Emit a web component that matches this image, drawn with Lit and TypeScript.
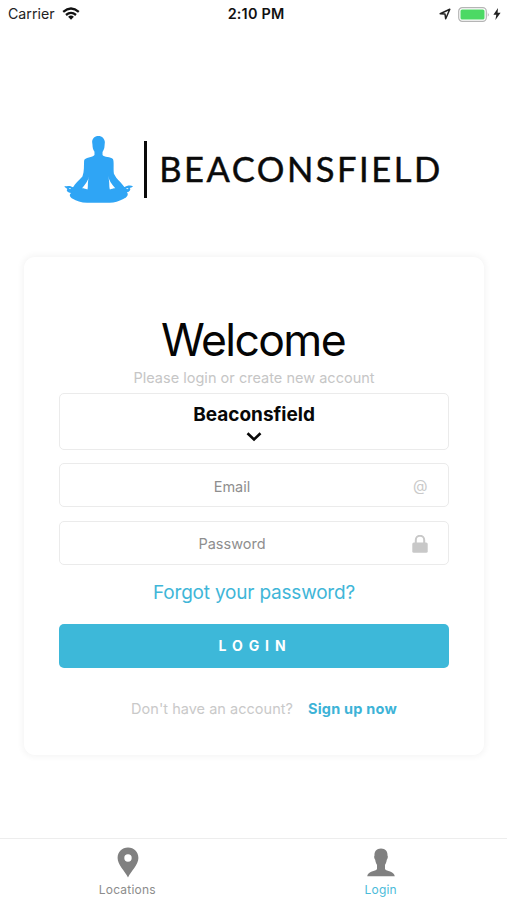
import { LitElement, html, css } from "lit";
import { customElement } from "lit/decorators.js";

@customElement("status-bar")
class StatusBar extends LitElement {
  static styles = css`
    :host { display: grid; grid-template-columns: 1fr auto 1fr; align-items: center; height: 28px; padding: 0 6px 0 8px; font-size: 14.2px; line-height: 28px; color: #222; }
    .left, .right { display: flex; align-items: center; }
    .wifi { margin: 0 0 1px 7px; }
    .time { font-weight: 600; color: #111; padding-left: 3px; font-size: 14.4px; letter-spacing: 0.2px; }
    .right { justify-content: flex-end; }
    .battery { margin: 0 3px 0 7px; }
    svg { display: block; }
  `;
  render() {
    return html`
      <div class="left">
        <span class="carrier">Carrier</span>
        <svg class="wifi" width="18" height="13" viewBox="0 0 18 13" fill="none" stroke="#111" stroke-width="2.3">
          <path d="M1.2 4.8Q9-1.8 16.8 4.8M4 8Q9 3.8 14 8" />
          <path d="M6.1 9.8Q9 7.4 11.9 9.8L9 12.8Z" fill="#111" stroke="none" />
        </svg>
      </div>
      <span class="time">2:10 PM</span>
      <div class="right">
        <svg width="12" height="12" viewBox="0 0 12 12" fill="none" stroke="#222" stroke-width="1.5" stroke-linejoin="round">
          <path d="M1.2 5.8L10.8 1.2L6.7 10.8L6 6Z" />
        </svg>
        <svg class="battery" width="32" height="15" viewBox="0 0 32 15">
          <rect x="0.7" y="0.7" width="27.6" height="13.6" rx="3.6" fill="#fff" stroke="#b5b5b5" stroke-width="1.2" />
          <rect x="2.5" y="2.5" width="24" height="10" rx="1.6" fill="#4cd964" />
          <path d="M29.8 5.2Q31.5 7.5 29.8 9.8Z" fill="#aaa" />
        </svg>
        <svg width="8" height="12" viewBox="0 0 8 12"><path d="M5 0L0.4 6.8H3.3L2.4 12L7.6 4.8H4.6Z" fill="#222" /></svg>
      </div>
    `;
  }
}

@customElement("brand-logo")
class BrandLogo extends LitElement {
  static styles = css`
    :host { display: flex; align-items: flex-start; height: 68px; padding-left: 64px; }
    svg { display: block; flex: none; }
    .rule { width: 2.5px; height: 57px; margin: 5px 0 0 11px; background: #0a0a0a; flex: none; }
    .name { margin-left: 6.5px; }
    text { font-family: Lato, sans-serif; font-size: 34.5px; fill: #0a0a0a; stroke: #0a0a0a; stroke-width: 0.45; }
  `;
  render() {
    return html`
      <svg width="69" height="67" viewBox="28 32 206 200" fill="#2fa5f5">
        <path fill-rule="evenodd" d="M131 32C142 32 149 40 150 50L149 62C149 70 145 76 143 80V89C147 96 168 94 174 101C178 108 175 128 177 145L184 157C192 167 200 173 207 183C209 186 211 182 216 181C222 179 229 179 234 182L231 185L224 187C229 190 224 199 216 200C222 207 216 216 205 220C190 228 176 232 160 231H101C82 232 65 226 54 219C46 215 42 207 49 202C40 201 33 195 38 190L30 184L30 181C39 184 43 179 49 183L55 185C62 173 71 166 83 153C89 138 87 120 88 106C89 95 115 97 119 89V79C115 74 113 66 113 58L112 50C112 40 119 32 131 32ZM103 151C101 164 93 175 82 188C88 188 93 190 98 192C101 182 97 174 103 151ZM160 151C165 174 162 182 165 192C170 190 175 188 181 188C169 175 162 164 160 151ZM42 187L46 191L49 188ZM213 188L217 191L221 187Z" />
      </svg>
      <div class="rule"></div>
      <svg class="name" width="292" height="64" viewBox="154 0 292 64">
        <text x="160.2" y="46" textLength="281" lengthAdjust="spacing">BEACONSFIELD</text>
      </svg>
    `;
  }
}

@customElement("login-card")
class LoginCard extends LitElement {
  static styles = css`
    :host { display: flex; flex-direction: column; box-sizing: border-box; height: 498px; margin: 0 23px 0 24px; padding: 56px 35px 0; border-radius: 11px; background: #fff; box-shadow: 0 0 6px 2px rgba(0, 0, 0, 0.045); text-align: center; }
    h1 { margin: 0; height: 54px; line-height: 54px; font-size: 44.5px; font-weight: 400; letter-spacing: -1.6px; text-indent: -2px; color: #050505; }
    .sub { height: 22px; line-height: 22px; margin-bottom: 3.6px; font-size: 14.5px; letter-spacing: 0.02px; color: #c6c6c6; }
    .box { box-sizing: border-box; border: 1.5px solid #ebebeb; border-radius: 5px; }
    .select { height: 57.5px; font-size: 19px; font-weight: 700; line-height: 42px; color: #080808; }
    .select svg { display: block; margin: -4px auto 0; }
    .field { display: grid; grid-template-columns: 344px 1fr; align-items: center; height: 44px; margin-top: 13.4px; padding-top: 1.5px; font-size: 14.5px; color: #8e8e8e; }
    .icon { display: block; margin-left: 8px; }
    .at { margin-left: 9px; text-align: left; font-size: 15px; color: #c9c9c9; line-height: 20px; }
    .forgot { height: 26px; line-height: 26px; margin: 15.5px 0 17.6px; font-size: 19px; letter-spacing: -0.2px; color: #3fb6d8; }
    .login { height: 44px; line-height: 44px; border-radius: 5px; background: #3db8d9; color: #fff; font-size: 14px; font-weight: 700; letter-spacing: 5.9px; text-indent: 2px; }
    .signup { display: flex; justify-content: center; gap: 15px; margin-top: 31px; padding-left: 20px; line-height: 20px; font-size: 14.5px; letter-spacing: 0.03px; color: #c9c9c9; white-space: nowrap; }
    .signup b { color: #3db3d7; letter-spacing: 0.2px; }
  `;
  render() {
    return html`
      <h1>Welcome</h1>
      <div class="sub">Please login or create new account</div>
      <div class="box select">
        Beaconsfield
        <svg width="16" height="10" viewBox="0 0 16 10" fill="none" stroke="#080808" stroke-width="2.6"><path d="M1.5 1.3L8 7.5L14.5 1.3" /></svg>
      </div>
      <div class="box field"><span>Email</span><span class="at">@</span></div>
      <div class="box field">
        <span>Password</span>
        <svg class="icon" width="16" height="18" viewBox="0 0 16 18">
          <rect x="0.3" y="7.4" width="15.4" height="10.4" rx="1.6" fill="#c8c8c8" />
          <path d="M3.8 8V5A4.2 4.2 0 0 1 12.2 5V8" fill="none" stroke="#c8c8c8" stroke-width="2" />
        </svg>
      </div>
      <div class="forgot">Forgot your password?</div>
      <div class="login">LOGIN</div>
      <div class="signup"><span>Don't have an account?</span><b>Sign up now</b></div>
    `;
  }
}

@customElement("tab-bar")
class TabBar extends LitElement {
  static styles = css`
    :host { display: grid; grid-template-columns: 1fr 1fr; box-sizing: border-box; height: 62px; border-top: 1.5px solid #ededed; background: #fff; }
    .tab { display: flex; flex-direction: column; align-items: center; padding: 8px 0 0 1px; font-size: 12px; line-height: 16px; letter-spacing: 0.2px; color: #8c8c8c; }
    .active { color: #4bbbd9; }
    svg { display: block; margin: 0 0 4px 1px; }
  `;
  render() {
    return html`
      <div class="tab">
        <svg width="22" height="31" viewBox="0 0 22 31"><path fill="#808080" fill-rule="evenodd" d="M11 0.5C17 0.5 21.4 5 21.4 11C21.4 18 14 24 11 30.5C8 24 0.6 18 0.6 11C0.6 5 5 0.5 11 0.5ZM11 7.3A3.7 3.7 0 1 0 11 14.7A3.7 3.7 0 1 0 11 7.3Z" /></svg>
        Locations
      </div>
      <div class="tab active">
        <svg width="28" height="31" viewBox="0 0 28 31"><path fill="#808080" d="M14 1.5C18.5 1.5 20.8 4.4 20.5 8.5C21.2 9 20.8 11.8 19.8 12.7C19.4 15.2 18.8 16.8 18 17.8V22C19.5 24.8 27 23.8 27.8 29.2H0.2C1 23.8 8.5 24.8 10 22V17.8C9.2 16.8 8.6 15.2 8.2 12.7C7.2 11.8 6.8 9 7.5 8.5C7.2 4.4 9.5 1.5 14 1.5Z" /></svg>
        Login
      </div>
    `;
  }
}

@customElement("app-root")
class AppRoot extends LitElement {
  static styles = css`
    :host { display: flex; flex-direction: column; height: 900px; overflow: hidden; background: #fff; font-family: Inter, "Liberation Sans", sans-serif; }
    brand-logo { margin: 107.5px 0 53.5px; }
    tab-bar { margin-top: auto; }
  `;
  render() {
    return html`<status-bar></status-bar><brand-logo></brand-logo><login-card></login-card><tab-bar></tab-bar>`;
  }
}
